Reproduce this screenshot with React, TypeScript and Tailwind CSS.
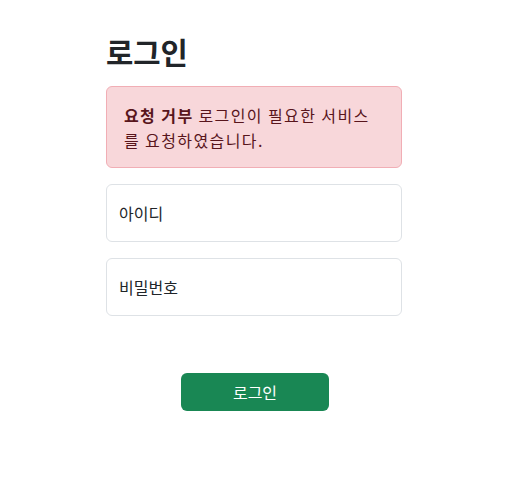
import React from 'react';

export default function App() {
  return (
    <div className="min-h-[490px] bg-white text-[#212529]" style={{fontFamily: '"Noto Sans CJK KR", "Noto Sans", sans-serif'}}>
      <div className="w-[296px] ml-[106px] pt-[34px]">
        <h1 className="text-[29.7px] leading-[1.2] font-bold mb-[16px]">로그인</h1>

        <div className="border border-[#f1aeb5] bg-[#f8d7da] text-[#58151c] rounded-[6px] px-[17px] pt-[16px] pb-[14px] text-[16px] leading-[25px] tracking-[1.4px] mb-[16px]">
          <strong className="font-semibold">요청 거부</strong> 로그인이 필요한 서비스를 요청하였습니다.
        </div>

        <form className="flex flex-col">
          <input
            type="text"
            placeholder="아이디"
            className="h-[58px] w-full rounded-[6px] border border-[#dee2e6] px-[12px] text-[16px] outline-none placeholder:text-[#212529] mb-[16px]"
          />
          <input
            type="password"
            placeholder="비밀번호"
            className="h-[58px] w-full rounded-[6px] border border-[#dee2e6] px-[12px] text-[16px] outline-none placeholder:text-[#212529]"
          />
          <div className="flex justify-center pl-[2px] mt-[57px]">
            <button
              type="button"
              className="w-[148px] h-[38px] rounded-[6px] bg-[#198754] text-white text-[16px]"
            >
              로그인
            </button>
          </div>
        </form>
      </div>
    </div>
  );
}
